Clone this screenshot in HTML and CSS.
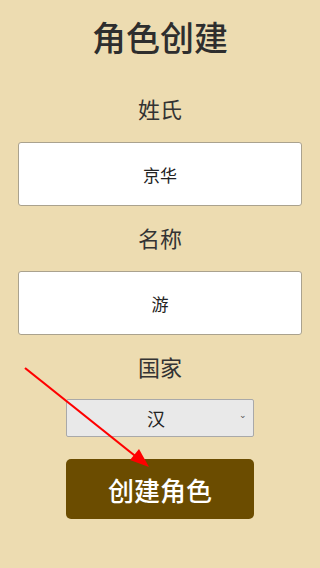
FILE: index.html
```html
<!DOCTYPE html>
<html lang="zh">
<head>
<meta charset="utf-8">
<link rel="stylesheet" href="styles.css">
</head>
<body>
<div class="page">
  <h1 class="title">角色创建</h1>
  <div class="label label-first">姓氏</div>
  <div class="field">京华</div>
  <div class="label">名称</div>
  <div class="field">游</div>
  <div class="label">国家</div>
  <div class="select"><span class="select-text">汉</span><span class="caret">&#8964;</span></div>
  <div class="btn">创建角色</div>
</div>
<svg class="arrow" width="320" height="568" viewBox="0 0 320 568">
  <line x1="25" y1="368" x2="144" y2="463" stroke="#ff0000" stroke-width="2.2"/>
  <polygon points="149,467 130,460 139,449" fill="#ff0000"/>
</svg>
</body>
</html>
```
FILE: styles.css
```css
html, body {
  margin: 0;
  padding: 0;
  background: #eddcb1;
  width: 320px;
  height: 568px;
  overflow: hidden;
}
body {
  font-family: "Noto Sans CJK SC", "Noto Sans", sans-serif;
  color: #333333;
  position: relative;
}
.page {
  display: flex;
  flex-direction: column;
  align-items: center;
}
.title {
  margin: 16px 0 0;
  font-size: 34px;
  line-height: 42px;
  font-weight: 500;
  color: #2e2e2e;
}
.label {
  margin-top: 16px;
  font-size: 22px;
  line-height: 30px;
  color: #333;
}
.label-first {
  margin-top: 35px;
}
.field {
  box-sizing: border-box;
  margin-top: 19px;
  width: 284px;
  height: 64px;
  background: #ffffff;
  border: 1px solid #aaa28e;
  border-radius: 3px;
  display: flex;
  align-items: center;
  justify-content: center;
  font-size: 17px;
  color: #222;
}
.select {
  box-sizing: border-box;
  margin-top: 18px;
  width: 188px;
  height: 38px;
  padding-right: 8px;
  background: #e9e9e9;
  border: 1px solid #a9a9a9;
  border-radius: 2px;
  display: flex;
  align-items: center;
  justify-content: center;
  position: relative;
  font-size: 18px;
  color: #222;
}
.caret {
  position: absolute;
  right: 6px;
  top: 8px;
  font-size: 9px;
  color: #555;
}
.btn {
  box-sizing: border-box;
  margin-top: 22px;
  width: 188px;
  height: 60px;
  background: #6b4c00;
  border-radius: 5px;
  color: #ffffff;
  font-size: 26px;
  font-weight: 500;
  display: flex;
  align-items: center;
  justify-content: center;
}
.arrow {
  position: absolute;
  left: 0;
  top: 0;
  pointer-events: none;
}
```
